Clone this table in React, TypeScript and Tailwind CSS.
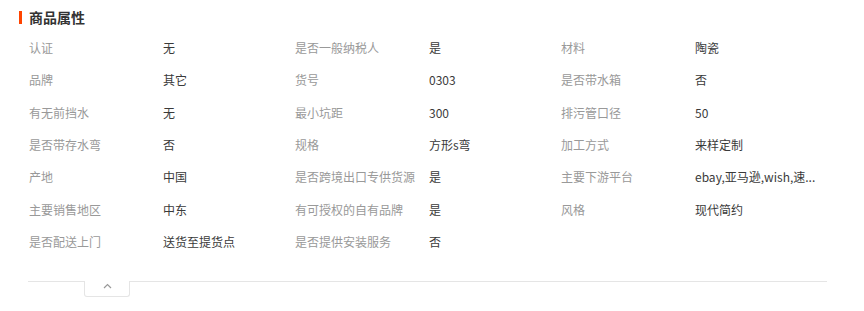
import React from "react";

const rows: [string, string][][] = [
  [["认证", "无"], ["是否一般纳税人", "是"], ["材料", "陶瓷"]],
  [["品牌", "其它"], ["货号", "0303"], ["是否带水箱", "否"]],
  [["有无前挡水", "无"], ["最小坑距", "300"], ["排污管口径", "50"]],
  [["是否带存水弯", "否"], ["规格", "方形s弯"], ["加工方式", "来样定制"]],
  [["产地", "中国"], ["是否跨境出口专供货源", "是"], ["主要下游平台", "ebay,亚马逊,wish,速..."]],
  [["主要销售地区", "中东"], ["有可授权的自有品牌", "是"], ["风格", "现代简约"]],
  [["是否配送上门", "送货至提货点"], ["是否提供安装服务", "否"]],
];

export default function App() {
  return (
    <div
      className="w-[864px] h-[311px] bg-white overflow-hidden"
      style={{ fontFamily: '"Noto Sans CJK SC", "Liberation Sans", sans-serif' }}
    >
      <div className="flex items-center pl-[19px] pt-[5px] h-[24px] box-content">
        <div className="w-[3px] h-[13px] bg-[#ff4400]" />
        <div className="ml-[7px] text-[14px] font-bold text-[#333] leading-[24px]">商品属性</div>
      </div>
      <div className="ml-[29px] w-[798px] mt-[3px]">
        {rows.map((row, i) => (
          <div key={i} className="flex h-[32.33px] items-center text-[12px]">
            {row.map(([k, v], j) => (
              <div key={j} className="flex w-[266px]">
                <div className="w-[134px] text-[#999]">{k}</div>
                <div className="w-[132px] text-[#3a3a3a] truncate">{v}</div>
              </div>
            ))}
          </div>
        ))}
      </div>
      <div className="ml-[28px] w-[799px] mt-[23px] border-t border-[#e5e5e5] relative">
        <div className="absolute left-[56px] top-[-1px] w-[46px] h-[16px] bg-white border border-t-0 border-[#e5e5e5] rounded-b-[3px] flex items-center justify-center">
          <svg width="9" height="6" viewBox="0 0 9 6" className="mt-[-5px]">
            <path d="M1 5 L4.5 1.5 L8 5" fill="none" stroke="#999" strokeWidth="1.2" />
          </svg>
        </div>
      </div>
    </div>
  );
}
